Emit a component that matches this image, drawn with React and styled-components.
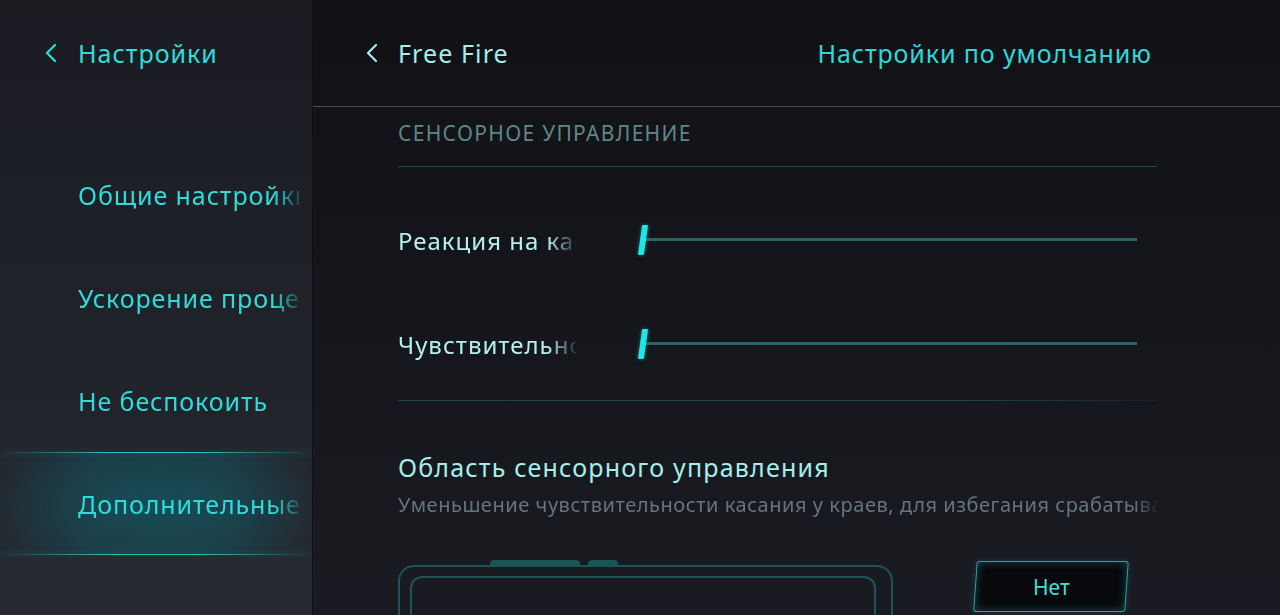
import React from "react";
import styled, { createGlobalStyle } from "styled-components";

const Global = createGlobalStyle`
  html, body { margin: 0; padding: 0; background: #111115; }
  body { font-family: "Noto Sans", "Open Sans", sans-serif; }
  * { box-sizing: border-box; }
`;

const Chevron = ({ color }) => (
  <svg width="14" height="22" viewBox="0 0 14 22" fill="none">
    <path d="M11 3 L3 11 L11 19" stroke={color} strokeWidth="2.2" strokeLinecap="round" strokeLinejoin="round" />
  </svg>
);

const sidebarItems = [
  "Общие настройки",
  "Ускорение процессора",
  "Не беспокоить",
  "Дополнительные настройки",
];

const sliders = ["Реакция на касание", "Чувствительность"];

const App = () => {
  return (
    <Screen>
      <Global />
      <Sidebar>
        <SideHeader>
          <Chevron color="#2fdcdc" />
          <span>Настройки</span>
        </SideHeader>
        <Nav>
          {sidebarItems.map((t, i) => (
            <NavItem key={t} $active={i === 3}>
              <NavText>{t}</NavText>
            </NavItem>
          ))}
        </Nav>
      </Sidebar>

      <Main>
        <MainHeader>
          <Back>
            <Chevron color="#a6eeec" />
            <span>Free Fire</span>
          </Back>
          <Defaults>Настройки по умолчанию</Defaults>
        </MainHeader>

        <Content>
          <SectionLabel>СЕНСОРНОЕ УПРАВЛЕНИЕ</SectionLabel>
          <Divider />
          <Sliders>
            {sliders.map((s) => (
              <SliderRow key={s}>
                <RowLabel>{s}</RowLabel>
                <Slider>
                  <Thumb />
                  <Track />
                </Slider>
              </SliderRow>
            ))}
          </Sliders>
          <Divider $fade />

          <AreaTitle>Область сенсорного управления</AreaTitle>
          <AreaDesc>
            Уменьшение чувствительности касания у краев, для избегания срабатывания
          </AreaDesc>

          <Preview>
            <Device>
              <Notch>
                <NotchPart $w={90} />
                <NotchPart $w={30} />
              </Notch>
              <Screenish />
            </Device>
            <Choice>
              <span>Нет</span>
            </Choice>
          </Preview>
        </Content>
      </Main>
    </Screen>
  );
};

const Screen = styled.div`
  width: 1280px;
  height: 615px;
  overflow: hidden;
  display: grid;
  grid-template-columns: 313px minmax(0, 1fr);
`;

const Sidebar = styled.aside`
  background: linear-gradient(180deg, #1a1c22 0%, #22242b 55%, #2b2d35 100%);
  border-right: 1px solid #101014;
  display: flex;
  flex-direction: column;
`;

const SideHeader = styled.div`
  height: 106px;
  display: flex;
  align-items: center;
  gap: 20px;
  padding-left: 44px;
  color: #2fdcdc;
  font-size: 25px;
  letter-spacing: 1px;
`;

const Nav = styled.nav`
  padding-top: 37px;
  display: flex;
  flex-direction: column;
`;

const NavItem = styled.div`
  position: relative;
  height: 103px;
  display: flex;
  align-items: center;
  padding-left: 78px;
  padding-right: 13px;
  ${(p) =>
    p.$active &&
    `
    background:
      radial-gradient(ellipse 55% 65% at 52% 50%, rgba(18, 100, 112, 0.45), rgba(18, 90, 100, 0) 100%),
      linear-gradient(90deg, rgba(20, 60, 72, 0.1) 0%, rgba(20, 76, 88, 0.5) 30%, rgba(20, 76, 88, 0.5) 72%, rgba(20, 70, 80, 0) 100%);
    &::before, &::after {
      content: "";
      position: absolute;
      left: 0;
      right: 0;
      height: 1px;
      background: linear-gradient(90deg, rgba(40,200,200,0) 0%, rgba(50,210,210,0.85) 35%, rgba(50,210,210,0.85) 65%, rgba(40,200,200,0) 100%);
      box-shadow: 0 0 6px rgba(40, 210, 210, 0.4);
    }
    &::before { top: 0; }
    &::after { bottom: 0; }
  `}
`;

const NavText = styled.span`
  color: #2fdcdc;
  font-size: 25px;
  letter-spacing: 0.9px;
  white-space: nowrap;
  overflow: hidden;
  width: 222px;
  -webkit-mask-image: linear-gradient(90deg, #000 88%, rgba(0, 0, 0, 0.2) 100%);
  mask-image: linear-gradient(90deg, #000 88%, rgba(0, 0, 0, 0.2) 100%);
`;

const Main = styled.main`
  min-width: 0;
  background: linear-gradient(180deg, #111115 0%, #16171c 50%, #1d1e25 100%);
  display: flex;
  flex-direction: column;
`;

const MainHeader = styled.header`
  height: 107px;
  border-bottom: 1px solid #4a4b56;
  display: flex;
  align-items: center;
  justify-content: space-between;
  padding: 0 128px 0 52px;
`;

const Back = styled.div`
  display: flex;
  align-items: center;
  gap: 19px;
  color: #a6eeec;
  font-size: 25px;
  letter-spacing: 1.1px;
`;

const Defaults = styled.div`
  color: #2fd8d8;
  font-size: 25px;
  letter-spacing: 0.9px;
`;

const Content = styled.section`
  min-width: 0;
  padding: 0 123px 0 85px;
  display: flex;
  flex-direction: column;
`;

const SectionLabel = styled.div`
  height: 59px;
  padding-bottom: 7px;
  display: flex;
  align-items: center;
  color: #5e8788;
  font-size: 21px;
  letter-spacing: 1.3px;
`;

const Divider = styled.div`
  height: 1px;
  background: ${(p) =>
    p.$fade
      ? "linear-gradient(90deg, #1f4547 0%, #1f4547 75%, rgba(31,69,71,0.2) 100%)"
      : "#1f4a4c"};
`;

const Sliders = styled.div`
  padding: 21px 0 4px;
  display: flex;
  flex-direction: column;
`;

const SliderRow = styled.div`
  height: 104px;
  display: grid;
  grid-template-columns: 242px 1fr;
  align-items: center;
  padding-right: 20px;
`;

const RowLabel = styled.span`
  color: #b4f0ee;
  font-size: 24px;
  letter-spacing: 1px;
  white-space: nowrap;
  overflow: hidden;
  width: 178px;
  -webkit-mask-image: linear-gradient(90deg, #000 84%, rgba(0, 0, 0, 0.1) 100%);
  mask-image: linear-gradient(90deg, #000 84%, rgba(0, 0, 0, 0.1) 100%);
`;

const Slider = styled.div`
  display: flex;
  align-items: center;
  height: 32px;
`;

const Thumb = styled.div`
  width: 6px;
  height: 30px;
  background: #1ee6e6;
  transform: skewX(-8deg);
  border-radius: 1px;
  box-shadow: 0 0 4px rgba(30, 230, 230, 0.4);
`;

const Track = styled.div`
  flex: 1;
  height: 3px;
  margin-top: -2px;
  background: #2a6466;
  box-shadow: 0 0 0 1px rgba(8, 20, 22, 0.6);
`;

const AreaTitle = styled.div`
  margin-top: 50px;
  color: #a6eeec;
  font-size: 25px;
  letter-spacing: 1.2px;
  line-height: 32px;
`;

const AreaDesc = styled.div`
  margin-top: 9px;
  color: #65757a;
  font-size: 20px;
  letter-spacing: 0.55px;
  line-height: 26px;
  white-space: nowrap;
  overflow: hidden;
  -webkit-mask-image: linear-gradient(90deg, #000 97%, rgba(0, 0, 0, 0.1) 100%);
  mask-image: linear-gradient(90deg, #000 97%, rgba(0, 0, 0, 0.1) 100%);
`;

const Preview = styled.div`
  margin-top: 44px;
  display: flex;
  align-items: flex-start;
  gap: 82px;
`;

const Device = styled.div`
  position: relative;
  width: 495px;
  height: 200px;
  margin-top: 3px;
  border: 2px solid #1b5557;
  border-radius: 16px;
  padding: 9px 15px 0 10px;
`;

const Notch = styled.div`
  position: absolute;
  top: -7px;
  left: 90px;
  display: flex;
  gap: 8px;
`;

const NotchPart = styled.div`
  width: ${(p) => p.$w}px;
  height: 6px;
  background: #1b5557;
  border-radius: 4px 4px 0 0;
`;

const Screenish = styled.div`
  height: 100%;
  border: 2px solid #1b5557;
  border-bottom: none;
  border-radius: 12px 12px 0 0;
`;

const Choice = styled.div`
  width: 152px;
  height: 51px;
  margin-top: -1px;
  display: flex;
  align-items: center;
  justify-content: center;
  background: #07080b;
  border: 1.5px solid #2aa3a3;
  border-radius: 3px;
  transform: skewX(-4deg);
  box-shadow: inset 0 0 10px rgba(40, 190, 190, 0.35), 0 0 6px rgba(40, 190, 190, 0.2);
  span {
    transform: skewX(4deg);
    color: #3fe0d6;
    font-size: 21px;
  }
`;

export default App;
